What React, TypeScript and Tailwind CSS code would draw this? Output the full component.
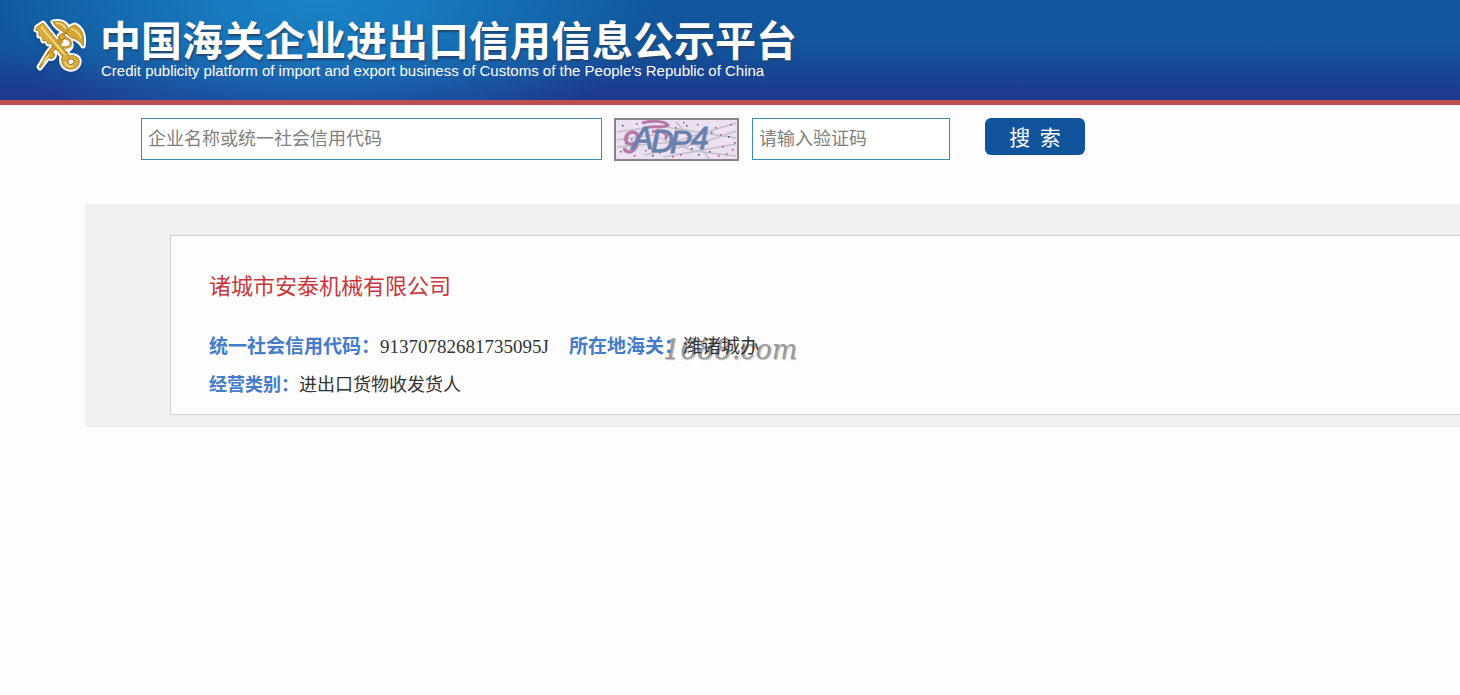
const DETAILS = [
  [
    { label: "统一社会信用代码", value: "91370782681735095J" },
    { label: "所在地海关", value: "潍诸城办" },
  ],
  [{ label: "经营类别", value: "进出口货物收发货人" }],
];

const SPECKS = [
  [8, 7], [15, 14], [11, 25], [6, 33], [22, 5], [31, 32], [38, 37], [45, 34], [20, 37], [52, 6], [61, 9], [69, 4],
  [74, 14], [83, 6], [90, 19], [95, 33], [101, 9], [108, 28], [114, 18], [118, 31], [116, 6], [84, 36], [66, 36],
  [104, 37], [77, 30], [17, 21], [112, 35], [97, 14], [58, 38], [120, 24], [72, 7], [106, 16],
];

function CustomsEmblem() {
  return (
    <svg viewBox="0 0 56 58" className="h-[58px] w-14 shrink-0 drop-shadow-md" role="img" aria-label="中国海关">
      <defs>
        <g id="emblem-staff" strokeLinecap="round" strokeLinejoin="round">
          {/* wings */}
          <path d="M21 5C27 4 35 4 36 13L35 17C32 14 25 13 21 5Z" />
          <path d="M35 17C35 12 38 9 43 8C50 11 53 19 51 29C48 24 45 22 40 21Z" />
          {/* staff */}
          <path d="M34 16L19 37L8 51L7 50L16 35L31 16Z" />
          <circle cx="19" cy="38" r="3.5" />
          <circle cx="30" cy="20" r="3" />
        </g>
        <g id="emblem-key" strokeLinecap="round" strokeLinejoin="round">
          <path d="M5 10L11 6L35 36L31 40L19 26L16 27L14 23L11 24L10 19L7 19L7 14L4 13Z" />
          <path d="M31 38C28 43 30 51 37 52C44 53 48 48 47 43C46 39 41 38 37 39L35 35Z" />
        </g>
      </defs>
      <g fill="#fff" stroke="#fff" strokeWidth="5">
        <use href="#emblem-staff" />
        <use href="#emblem-key" />
        <path d="M22 22C16 28 22 34 28 31C36 36 43 30 37 23" />
      </g>
      <path d="M23 23C18 26 21 31 26 29C32 24 31 20 26 20M33 21C39 22 41 28 36 30C31 32 26 28 23 33" fill="none" stroke="#c7962f" strokeWidth="2.5" />
      <use href="#emblem-staff" fill="#d3a535" stroke="#b08226" />
      <use href="#emblem-key" fill="#d6ac3c" stroke="#b08226" />
      <path d="M24 6C29 6 32 8 34 12M39 12C44 13 47 16 49 21M9 10L33 38M17 38L11 46M33 45C34 49 38 50 41 49" fill="none" stroke="#f3de8a" strokeWidth="1.5" />
      <path d="M36 43C39 41 42 42 42 45C41 48 37 48 36 46Z" fill="#fff" stroke="#98701f" />
    </svg>
  );
}

function Captcha() {
  return (
    <svg viewBox="0 0 125 43" className="h-[43px] w-[125px]" role="img" aria-label="验证码">
      <rect x="1" y="1" width="123" height="41" fill="#ebe1f2" stroke="#85858a" strokeWidth="2" />
      <path
        d="M3 14L45 8L122 20M3 29L60 24L122 5M30 37L90 24L122 13M50 39L122 26M62 4L96 41M3 22L38 17L80 33L122 38"
        fill="none"
        stroke="#c3bfc8"
        strokeWidth="1.5"
      />
      {SPECKS.map(([x, y], i) => (
        <rect key={i} x={x} y={y} width="1.5" height="1.5" fill={i % 3 ? "#a34d83" : "#55456f"} />
      ))}
      <path d="M28 5C38 2 50 3 54 7C48 11 39 7 32 10M38 14C48 11 56 17 51 21" fill="none" stroke="#b879a7" strokeWidth="3" />
      <g className="font-['Liberation_Sans'] italic" fontSize="32">
        <text x="8" y="35" fill="#b47ba9" stroke="#b47ba9">9</text>
        <text x="18" y="31" fill="#6a80ad" stroke="#6a80ad">A</text>
        <text x="37" y="34" fill="#6a80ad" stroke="#6a80ad">D</text>
        <text x="56" y="35" fill="#6a80ad" stroke="#6a80ad">P</text>
        <text x="77" y="31" fill="#6a80ad" stroke="#6a80ad">4</text>
      </g>
    </svg>
  );
}

function Header() {
  return (
    <header className="flex h-[105px] items-start border-b-5 border-[#bd4f52] bg-[radial-gradient(ellipse_340px_150px_at_320px_0px,#1a82c6_0%,#1a82c6cc_30%,#1a82c600_100%),linear-gradient(to_bottom,#10579d_0%,#12559c_45%,#1c3c8f_90%)] pl-8 text-white">
      <div className="pt-[17px]">
        <CustomsEmblem />
      </div>
      <div className="pt-[15px] pl-3">
        <h1 className="text-[41px] leading-[46px] font-bold whitespace-nowrap [text-shadow:1px_2px_2px_#23456f]">
          中国海关企业进出口信用信息公示平台
        </h1>
        <p className="mt-0.5 pl-px font-['Liberation_Sans',sans-serif] text-[15px] leading-4 whitespace-nowrap">
          Credit publicity platform of import and export business of Customs of the People&apos;s Republic of China
        </p>
      </div>
    </header>
  );
}

function SearchForm() {
  const input =
    "h-[42px] border border-[#3c8dab] bg-white px-[6px] pb-1 text-[18px] text-[#333] outline-none placeholder:text-[#808080]";

  return (
    <form className="flex items-start pl-[141px] pt-[13px]" onSubmit={(e) => e.preventDefault()}>
      <input aria-label="企业名称或统一社会信用代码" placeholder="企业名称或统一社会信用代码" className={`${input} w-[461px]`} />
      <div className="ml-3">
        <Captcha />
      </div>
      <input aria-label="请输入验证码" placeholder="请输入验证码" className={`${input} ml-[13px] w-[198px]`} />
      <button type="submit" className="ml-[35px] h-[37px] w-[100px] rounded-md bg-[#12549b] text-[21px] leading-[37px] whitespace-pre text-white">
        搜  索
      </button>
    </form>
  );
}

function Result() {
  return (
    <main className="mt-[43px] ml-[85px] bg-[#f0f0f0] pt-[31px] pb-3 pl-[85px]">
      <section className="relative border border-r-0 border-[#d0d0d0] bg-[#fdfdfd] pt-8 pb-[10px] pl-[38px]">
        <h2 className="text-[22px] leading-8 text-[#c9353c]">诸城市安泰机械有限公司</h2>
        <span
          aria-hidden="true"
          className="absolute top-[98px] left-[492px] font-['DejaVu_Serif',serif] text-[27px] leading-8 text-[#999] italic [text-shadow:1px_1px_1px_#bbb]"
        >
          1688.com
        </span>
        <dl className="relative mt-7 font-['Liberation_Serif','Noto_Sans_CJK_SC',serif]">
          {DETAILS.map((row, i) => (
            <div key={i} className={i === 0 ? "flex gap-5 text-[19px] leading-[38px]" : "flex text-[18px] leading-[38px]"}>
              {row.map((item) => (
                <div key={item.label} className="flex">
                  <dt className="font-bold text-[#447bcb]">{item.label}：</dt>
                  <dd className="text-[#333]">{item.value}</dd>
                </div>
              ))}
            </div>
          ))}
        </dl>
      </section>
    </main>
  );
}

export default function App() {
  return (
    <div className="min-h-screen overflow-x-hidden bg-[#fdfdfd] font-['Noto_Sans_CJK_SC',sans-serif]">
      <Header />
      <SearchForm />
      <Result />
    </div>
  );
}
